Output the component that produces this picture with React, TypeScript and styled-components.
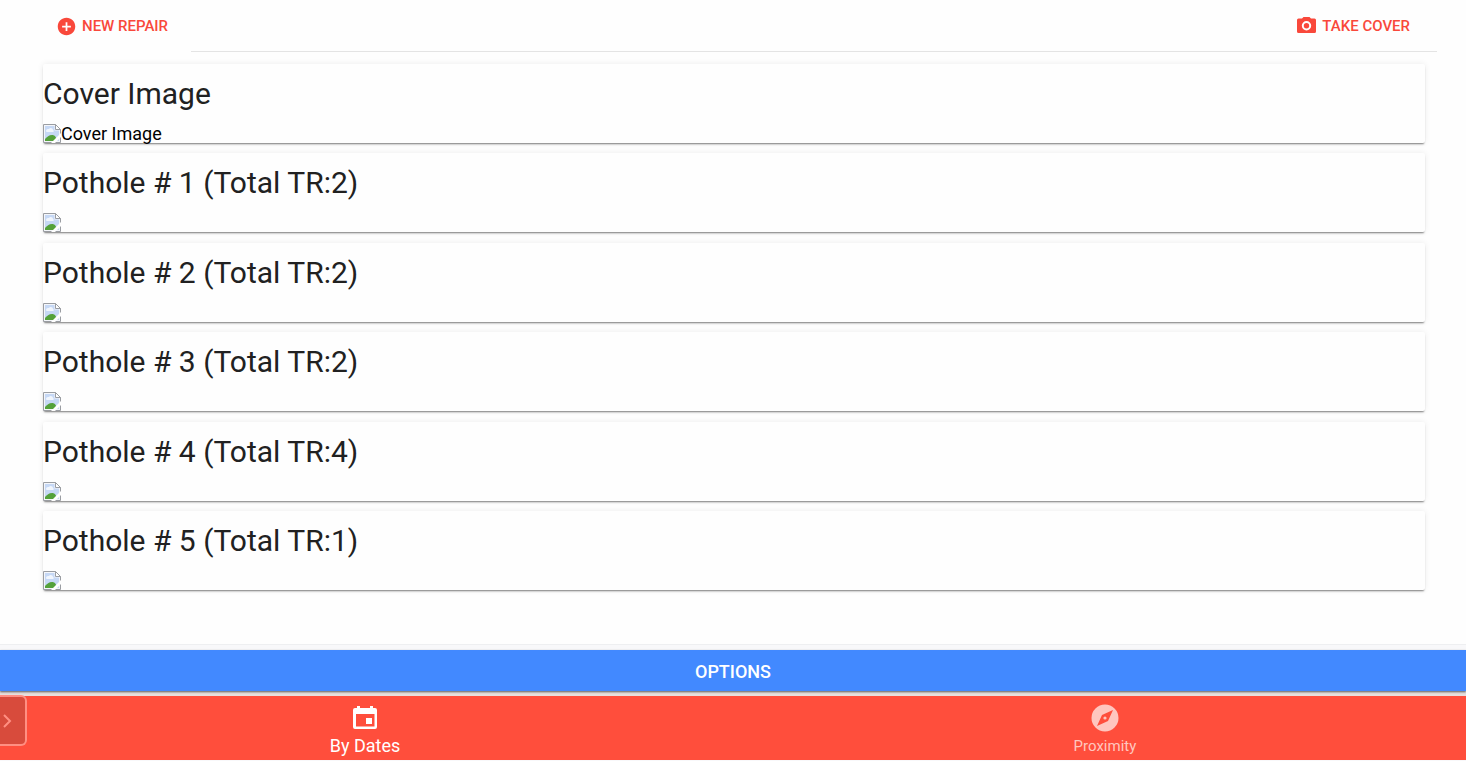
import React, { useState } from 'react';
import styled, { createGlobalStyle } from 'styled-components';
import { MdAddCircle } from 'react-icons/md';

const GlobalStyle = createGlobalStyle`
  *, *::before, *::after { box-sizing: border-box; }
  body {
    margin: 0;
    background: #fefefe;
    color: #000;
    font-family: Roboto, "Liberation Sans", sans-serif;
  }
  button { font-family: inherit; cursor: pointer; }
`;

const Page = styled.div`
  display: flex;
  flex-direction: column;
  min-height: 100vh;
`;

const Toolbar = styled.header`
  display: flex;
  height: 52px;
  padding: 0 29px 0 43px;
`;

const ToolbarStart = styled.div`
  flex: 0 0 148px;
  display: flex;
  align-items: center;
`;

const ToolbarEnd = styled.div`
  flex: 1;
  display: flex;
  align-items: center;
  justify-content: flex-end;
  padding-right: 14px;
  border-bottom: 1px solid #e4e4e4;
`;

const ToolButton = styled.button`
  display: flex;
  align-items: center;
  gap: 5px;
  padding: 0 13px;
  border: 0;
  background: none;
  color: #f9483b;
  font-size: 15px;
  font-weight: 500;
  line-height: 36px;
  white-space: nowrap;

  svg { width: 21px; height: 21px; }
`;

const RepairList = styled.main`
  flex: 1;
  display: flex;
  flex-direction: column;
  justify-content: space-between;
  gap: 10px;
  padding: 12px 41px 54px 43px;
`;

const Card = styled.section`
  height: 79px;
  border-radius: 2px;
  background: #fefefe;
  box-shadow: 0 2px 2px -1px rgba(0, 0, 0, 0.5), 0 0 6px rgba(0, 0, 0, 0.08);
`;

const CardTitle = styled.h2`
  margin: 0;
  padding: 10px 0;
  font-size: 30px;
  font-weight: 400;
  line-height: 40px;
  color: #212121;
`;

const Photo = styled.div`
  display: flex;
  align-items: center;
  height: 19px;
  font-size: 18px;
  line-height: 19px;

  svg { flex: none; }
`;

const Footer = styled.footer`
  position: relative;
  padding: 5px 0 1px;
  border-top: 1px solid #eeeff1;
  background: #f8f8fa;
`;

const OptionsButton = styled.button`
  display: block;
  position: relative;
  width: 100%;
  height: 41px;
  border: 0;
  background: #4289ff;
  box-shadow: 0 1px 2px rgba(0, 0, 0, 0.6);
  color: #fff;
  font-size: 18px;
  font-weight: 500;
  line-height: 41px;
`;

const TabBar = styled.nav`
  display: flex;
  justify-content: space-around;
  gap: 14px;
  height: 69px;
  border-top: 5px solid #e6dfdd;
  background: #ff4e3c;
`;

const Tab = styled.button<{ $active: boolean }>`
  display: flex;
  flex-direction: column;
  align-items: center;
  justify-content: flex-end;
  gap: 2px;
  padding: 0 0 2px;
  border: 0;
  background: none;
  color: ${({ $active }) => ($active ? '#fff' : '#ffc6bf')};
  font-size: ${({ $active }) => ($active ? 18 : 15)}px;
  line-height: 24px;

  svg { width: 28px; height: 28px; }
`;

const DrawerHandle = styled.button`
  position: absolute;
  left: 0;
  bottom: 15px;
  display: flex;
  align-items: center;
  width: 27px;
  height: 51px;
  padding: 0;
  border: 2px solid #ff8f82;
  border-left: 0;
  border-radius: 0 6px 6px 0;
  background: #d84b3c;
  color: #ff8f82;
`;

function CameraIcon() {
  return (
    <svg viewBox="0 0 21 21" fill="currentColor" fillRule="evenodd" aria-hidden="true">
      <path d="M7.500 2h6l1.500 1.500h3.500a1.500 1.500 0 0 1 1.500 1.500v11.500a1.500 1.500 0 0 1-1.500 1.500h-16A1.500 1.500 0 0 1 1 16.500V5a1.500 1.500 0 0 1 1.500-1.500H6zM10.500 6a4.700 4.700 0 1 0 0 9.400 4.700 4.700 0 1 0 0-9.400z" />
      <circle cx="10.500" cy="10.700" r="2.700" />
    </svg>
  );
}

function CalendarIcon() {
  return (
    <svg viewBox="0 0 28 28" fill="currentColor" fillRule="evenodd" aria-hidden="true">
      <path d="M6 2h3v2h10V2h3v2h2a2 2 0 0 1 2 2v17a2 2 0 0 1-2 2H4a2 2 0 0 1-2-2V6a2 2 0 0 1 2-2h2zM5 10v12.500h18.500V10z" />
      <path d="M15 14h6v6h-6z" />
    </svg>
  );
}

function CompassIcon() {
  return (
    <svg viewBox="0 0 28 28" fill="currentColor" fillRule="evenodd" aria-hidden="true">
      <path d="M14 .5a13.500 13.500 0 1 0 0 27 13.500 13.500 0 1 0 0-27zM22 6l-5 11-11 5 5-11z" />
      <circle cx="14" cy="14" r="1.600" />
    </svg>
  );
}

function MissingImage() {
  return (
    <svg width="18" height="19" viewBox="0 0 18 19" aria-hidden="true">
      <path d="M.5.5h12l5 5v13H.5z" fill="#f4f6fa" stroke="#9a9da2" />
      <path d="M2 2h9.500v4.500H16V17H2z" fill="#c6d8f5" />
      <path d="M3 7c0-2 2-2 3-2 1-2 4-1 4 1 1 0 1 2 0 2H4C3 8 3 7 3 7z" fill="#f1f6fd" />
      <path d="M2 17v-2c2-2 4-4 7-4 3 0 4 2 5 6z" fill="#54a13b" />
      <path d="M8 19 18 9v4l-6 6z" fill="#fff" />
      <path d="M12.500.5v5h5z" fill="#fff" stroke="#9a9da2" />
    </svg>
  );
}

const potholes = [
  { id: 1, total: 2 },
  { id: 2, total: 2 },
  { id: 3, total: 2 },
  { id: 4, total: 4 },
  { id: 5, total: 1 },
];

export default function App() {
  const [tab, setTab] = useState('dates');
  return (
    <Page>
      <GlobalStyle />
      <Toolbar>
        <ToolbarStart>
          <ToolButton type="button"><MdAddCircle />NEW REPAIR</ToolButton>
        </ToolbarStart>
        <ToolbarEnd>
          <ToolButton type="button"><CameraIcon />TAKE COVER</ToolButton>
        </ToolbarEnd>
      </Toolbar>
      <RepairList>
        <Card>
          <CardTitle>Cover Image</CardTitle>
          <Photo><MissingImage />Cover Image</Photo>
        </Card>
        {potholes.map(({ id, total }) => (
          <Card key={id}>
            <CardTitle>{`Pothole # ${id} (Total TR:${total})`}</CardTitle>
            <Photo><MissingImage /></Photo>
          </Card>
        ))}
      </RepairList>
      <Footer>
        <OptionsButton type="button">OPTIONS</OptionsButton>
        <TabBar>
          <Tab type="button" $active={tab === 'dates'} onClick={() => setTab('dates')}>
            <CalendarIcon />By Dates
          </Tab>
          <Tab type="button" $active={tab === 'proximity'} onClick={() => setTab('proximity')}>
            <CompassIcon />Proximity
          </Tab>
        </TabBar>
        <DrawerHandle type="button" aria-label="Open drawer">
          <svg width="14" height="18" viewBox="0 0 14 18" fill="none" stroke="currentColor" strokeWidth="2">
            <path d="m4 3 6 6-6 6" />
          </svg>
        </DrawerHandle>
      </Footer>
    </Page>
  );
}
